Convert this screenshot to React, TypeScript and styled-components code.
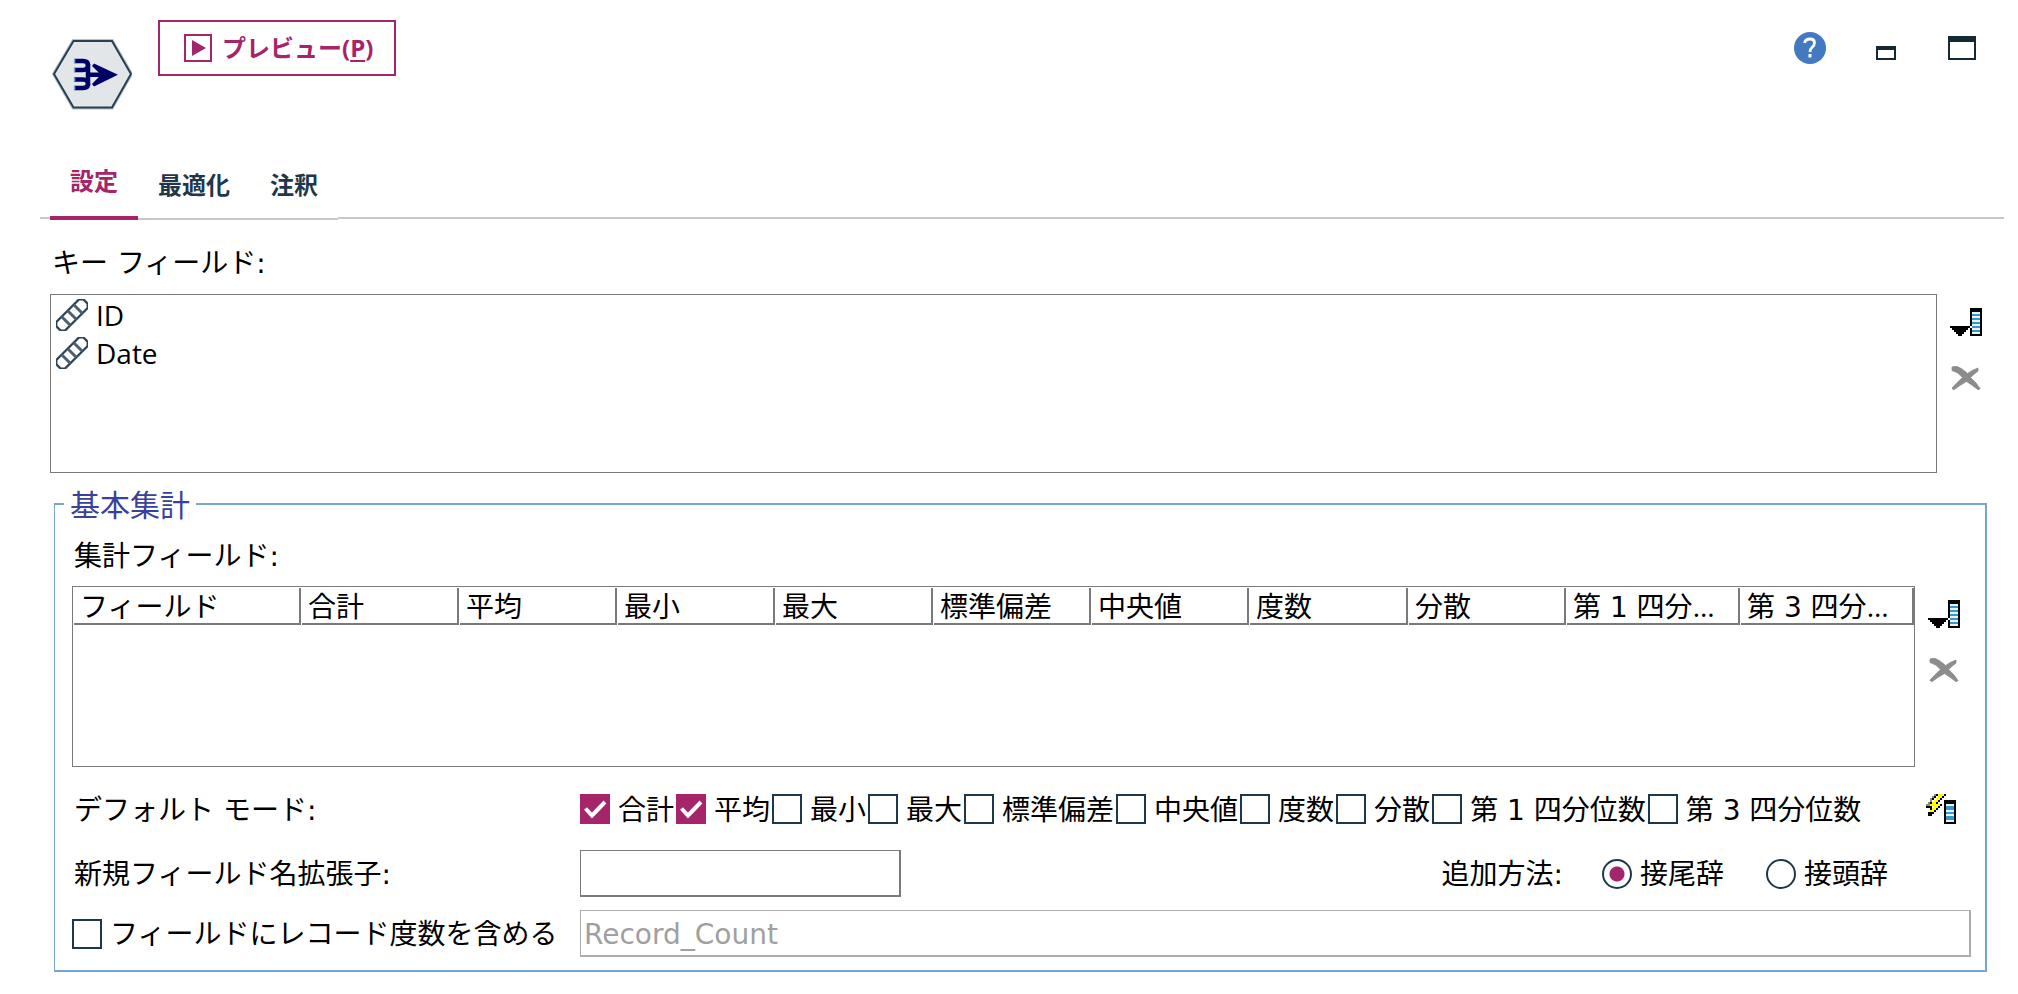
import React, { useState } from "react";
import styled, { createGlobalStyle } from "styled-components";

const accent = "#a5246a";
const ink = "#1f374b";
const line = "#7a7a7a";
const blue = "#76a5d5";

const GlobalStyle = createGlobalStyle`
  *, *::before, *::after { box-sizing: border-box; }
  body {
    margin: 0;
    background: #fff;
    color: #000;
    font: 28px/40px "DejaVu Sans", "Noto Sans CJK JP", sans-serif;
  }
  button, input { font: inherit; color: inherit; margin: 0; }
  button { background: none; border: 0; padding: 0; cursor: pointer; }
  svg { display: block; }
`;

const Page = styled.main`
  padding-bottom: 22px;
`;

const Header = styled.header`
  display: flex;
  align-items: flex-start;
  height: 160px;
  padding: 20px 40px 0 52px;
`;

const NodeBadge = styled.div`
  margin: 18px 26px 0 0;
`;

const PreviewButton = styled.button`
  display: flex;
  align-items: center;
  gap: 10px;
  height: 56px;
  padding: 0 21px 0 24px;
  border: 2px solid ${accent};
  color: ${accent};
  font: bold 24px/36px "Open Sans", "Noto Sans CJK JP", sans-serif;
  white-space: nowrap;
`;

const Mnemonic = styled.span`
  text-decoration: underline;
  text-decoration-thickness: 2px;
  text-underline-offset: 3px;
`;

const WindowControls = styled.div`
  display: flex;
  gap: 44px;
  margin: 12px 0 0 auto;
`;

const TabBar = styled.div`
  display: flex;
  align-items: flex-end;
  height: 60px;
  padding: 0 14px 0 40px;
`;

const TabRule = styled.span<{ $grow?: boolean }>`
  flex: ${(p) => (p.$grow ? "1" : "0 0 10px")};
  margin-bottom: 1px;
  border-bottom: 2px solid #c8c8c8;
`;

const Tab = styled.button<{ $active: boolean }>`
  padding: 0 20px ${(p) => (p.$active ? 18 : 16)}px;
  border-bottom: ${(p) => (p.$active ? `4px solid ${accent}` : "2px solid #c8c8c8")};
  color: ${(p) => (p.$active ? accent : ink)};
  font: bold 24px/36px "Noto Sans CJK JP", sans-serif;
  white-space: nowrap;
`;

const KeySection = styled.section`
  padding: 24px 0 0 50px;
`;

const KeyLabel = styled.h2`
  margin: 0 0 10px 2px;
  font: inherit;
`;

const Split = styled.div`
  display: flex;
  gap: 13px;
`;

const Actions = styled.div<{ $width: number }>`
  display: flex;
  flex-direction: column;
  align-items: flex-start;
  gap: 30px;
  flex: 0 0 ${(p) => p.$width}px;
  padding-top: 14px;
`;

const KeyList = styled.ul`
  flex: 1;
  min-width: 0;
  min-height: 179px;
  margin: 0;
  padding: 1px 5px;
  border: 1px solid ${line};
  list-style: none;
`;

const KeyItem = styled.li`
  display: flex;
  align-items: center;
  gap: 8px;
  height: 38px;
  font-family: "Open Sans", "Noto Sans CJK JP", sans-serif;
`;

const Group = styled.fieldset`
  min-width: 0;
  margin: 11px 31px 0 54px;
  padding: 13px 14px 13px 16px;
  border: 2px solid ${blue};
  border-left-width: 1px;
`;

const GroupTitle = styled.legend`
  margin-left: -7px;
  padding: 4px 6px 0;
  color: #3a419b;
  font-size: 30px;
  line-height: 36px;
`;

const GroupBody = styled.div`
  padding-left: 1px;
`;

const FieldsLabel = styled.h3`
  margin: 0 0 9px 2px;
  font: inherit;
`;

const TableBox = styled.div`
  flex: 1;
  min-width: 0;
  min-height: 181px;
  border: 1px solid ${line};
`;

const Table = styled.table`
  width: 100%;
  table-layout: fixed;
  border-collapse: collapse;
`;

const HeadCell = styled.th`
  padding: 1px 0 0 1px;
  font-weight: normal;
  text-align: left;
`;

const HeadText = styled.div`
  height: 37px;
  padding: 0 0 0 6px;
  border-right: 2px solid ${line};
  border-bottom: 2px solid ${line};
  line-height: 40px;
  white-space: nowrap;
  overflow: hidden;
`;

const Dots = styled.span`
  font-family: "Open Sans", sans-serif;
  line-height: 1;
`;

const Form = styled.div`
  display: flex;
  flex-direction: column;
  gap: 13px;
  margin-top: 14px;
`;

const Row = styled.div<{ $height: number }>`
  display: flex;
  align-items: center;
  min-height: ${(p) => p.$height}px;
`;

const Caption = styled.span`
  padding-top: 3px;
  white-space: nowrap;
`;

const LabelCell = styled.div<{ $inset?: boolean }>`
  display: flex;
  flex: 0 0 508px;
  padding-left: ${(p) => (p.$inset ? 2 : 0)}px;
`;

const CheckRow = styled.div`
  display: flex;
  flex: 1;
  gap: 2px;
`;

const Choice = styled.label`
  display: flex;
  align-items: center;
  gap: 8px;
`;

const Mark = styled.span`
  display: grid;
  flex: none;
  width: 30px;
  height: 30px;
  > * { grid-area: 1 / 1; }
  > svg { pointer-events: none; }
`;

const CheckInput = styled.input`
  appearance: none;
  width: 30px;
  height: 30px;
  border: 2px solid ${ink};
  background: #fff;
  &:checked { border-color: ${accent}; background: ${accent}; }
`;

const RadioInput = styled.input`
  appearance: none;
  width: 30px;
  height: 30px;
  border: 2px solid ${ink};
  border-radius: 50%;
  background: #fff;
  &:checked { background: radial-gradient(circle, ${accent} 7px, #fff 8px); }
`;

const TextInput = styled.input<{ $wide?: boolean }>`
  ${(p) => (p.$wide ? "flex: 1; min-width: 0;" : "width: 321px;")}
  height: 47px;
  padding: 2px 3px 0;
  border: solid ${line};
  border-width: 1px 2px 2px 1px;
  background: #fff;
  &:disabled { border-color: #adadad; color: #a0a0a0; }
`;

const RadioGroup = styled.div`
  display: flex;
  align-items: center;
  gap: 39px;
  margin-left: auto;
  padding-right: 83px;
`;

const RadioOptions = styled.div`
  display: flex;
  gap: 42px;
`;

const IconSlot = styled.div`
  display: flex;
  flex: 0 0 45px;
`;

const NodeIcon = () => (
  <svg width="80" height="72" viewBox="0 0 80 72" aria-hidden="true">
    <path d="M2 36 21.500 3H60L79 36 60 69.500H21.500Z" fill="#e2e6e9" stroke="#b9c2c8" strokeWidth="4" />
    <path d="M2 36 21.500 3H60L79 36 60 69.500H21.500Z" fill="#e2e6e9" stroke="#274054" strokeWidth="2" />
    <path
      d="M22 23H31Q36 23 36 27 36 32 31 32H22M22 41.500H31Q36 41.500 36 46 36 50 31 50H22"
      fill="none"
      stroke="#000066"
      strokeWidth="4.500"
    />
    <path d="M36 26V48M36 36.800H52" fill="none" stroke="#000066" strokeWidth="4.500" />
    <path d="M42 25.500 66 36.800 42 48.500 40 46 49 36.800 40 28Z" fill="#000066" />
    <path d="M22.500 21v4M22.500 30v4M22.500 39.500v4M22.500 48v4" stroke="#7ba9cf" strokeWidth="1.500" />
  </svg>
);

const PlayIcon = () => (
  <svg width="28" height="28" viewBox="0 0 28 28" aria-hidden="true">
    <rect x="1" y="1" width="26" height="26" fill="none" stroke={accent} strokeWidth="2" />
    <path d="M8 6v16l14-8Z" fill={accent} />
  </svg>
);

const HelpIcon = () => (
  <svg width="32" height="32" viewBox="0 0 32 32" aria-hidden="true">
    <circle cx="16" cy="16" r="16" fill="#4379c0" />
    <path d="M10.500 11Q11.500 7 16 7 20.500 7 20.500 11 20.500 13.500 18 15.500 16 17 16 20" fill="none" stroke="#fff" strokeWidth="2.800" />
    <rect x="14.500" y="22" width="3" height="3.500" fill="#fff" />
  </svg>
);

const MinimizeIcon = () => (
  <svg width="32" height="32" viewBox="0 0 32 32" aria-hidden="true">
    <path fillRule="evenodd" d="M6 14h20v14H6ZM8 18v8h16v-8Z" fill="#152935" />
  </svg>
);

const MaximizeIcon = () => (
  <svg width="32" height="32" viewBox="0 0 32 32" aria-hidden="true">
    <path fillRule="evenodd" d="M2 4h28v24H2ZM4 10v16h24V10Z" fill="#152935" />
  </svg>
);

const ContinuousIcon = () => (
  <svg width="32" height="32" viewBox="0 0 32 32" aria-hidden="true">
    <g transform="rotate(-45 16 16)" fill="none">
      <path d="M0 10H32L35 13V19L32 22H0L-3 19V13Z" stroke="#9aa6af" strokeWidth="3" />
      <path d="M0 10H32L35 13V19L32 22H0L-3 19V13Z" fill="#fff" stroke="#2c4356" strokeWidth="2" />
      <path d="M7.500 10v12M16 10v12M24.500 10v12" stroke="#4b6070" strokeWidth="3" />
    </g>
  </svg>
);

const FieldPickerIcon = () => (
  <svg width="32" height="28" viewBox="0 0 32 28" aria-hidden="true" shapeRendering="crispEdges">
    <path d="M20 0h12v28H20Z" />
    <path d="M22 4h8v22h-8Z" fill="#e9f3f7" />
    <path d="M22 6h8v2h-8zM22 10h8v2h-8zM22 14h8v2h-8zM22 18h8v2h-8zM22 22h8v2h-8z" fill="#3399cc" />
    <path d="M0 18h20v2h-2v2h-2v2h-2v2h-2v2H8v-2H6v-2H4v-2H2v-2H0Z" />
    <path d="M20 18h2v2h-2Z" fill="#fff" />
  </svg>
);

const RemoveIcon = () => (
  <svg width="32" height="24" viewBox="0 0 32 24" aria-hidden="true">
    <path
      d="M2 1 6 0Q12 2 17.500 7.500 22 4 28 2V5Q24 8 20.500 11.500 26 16 30 22.500L28.500 24Q22 19 16.500 15.500 10 19 3.500 24L2 22Q7 16.500 12.500 11.500 8 6 2 4.500Z"
      fill="#8c8c8c"
      stroke="#8c8c8c"
      strokeWidth="0.800"
    />
  </svg>
);

const ApplyDefaultsIcon = () => (
  <svg width="30" height="30" viewBox="0 0 30 30" aria-hidden="true" shapeRendering="crispEdges">
    <path d="M8 0h12v2h-2v2h-2v2h-2v2h-2v2h4v2h-2v2h-2v2h-2v2H8v2H6v2H2v-4h2v-4H0v-2h2V8h2V4h2V2h2Z" fill="#000" />
    <path d="M8 0h2v2H8v2H6v4H4v4H0v-2h2V8h2V4h2V2h2Z" fill="#8a8a8a" />
    <path d="M12 0h6v2h-2v2h-2v2h-2v2h-2v2h4v2h-2v2h-2v2H8v2H4v-2h2v-4H4v-2h2V6h2V4h2V2h2Z" fill="#ffff00" />
    <path d="M10 2h2v2h-2v2H8v2H6V6h2V4h2ZM6 12h2v2H6Z" fill="#fff" />
    <path d="M18 6h12v24H18Z" />
    <path d="M20 10h8v18h-8Z" fill="#e9f3f7" />
    <path d="M20 12h8v4h-8zM20 18h8v2h-8zM20 22h8v4h-8z" fill="#3399cc" />
  </svg>
);

const CheckIcon = () => (
  <svg width="30" height="30" viewBox="0 0 30 30" aria-hidden="true">
    <path d="M5.500 14.500 12 21.500 25 8" fill="none" stroke="#fff" strokeWidth="4" />
  </svg>
);

type CheckboxProps = { label: string; checked: boolean; onToggle: () => void };

const Checkbox = ({ label, checked, onToggle }: CheckboxProps) => (
  <Choice>
    <Mark>
      <CheckInput type="checkbox" checked={checked} onChange={onToggle} />
      {checked && <CheckIcon />}
    </Mark>
    <Caption>{label}</Caption>
  </Choice>
);

const FieldActions = ({ width }: { width: number }) => (
  <Actions $width={width}>
    <button type="button" aria-label="フィールドの選択"><FieldPickerIcon /></button>
    <button type="button" aria-label="削除"><RemoveIcon /></button>
  </Actions>
);

const tabs = ["設定", "最適化", "注釈"];
const columns: { name: string; width: number; cut?: boolean }[] = [
  { name: "フィールド", width: 228 },
  { name: "合計", width: 158 },
  { name: "平均", width: 158 },
  { name: "最小", width: 158 },
  { name: "最大", width: 158 },
  { name: "標準偏差", width: 158 },
  { name: "中央値", width: 158 },
  { name: "度数", width: 159 },
  { name: "分散", width: 158 },
  { name: "第 1 四分", width: 174, cut: true },
  { name: "第 3 四分", width: 174, cut: true },
];
const modes = ["合計", "平均", "最小", "最大", "標準偏差", "中央値", "度数", "分散", "第 1 四分位数", "第 3 四分位数"];
const placements = ["接尾辞", "接頭辞"];

export default function App() {
  const [tab, setTab] = useState(tabs[0]);
  const [selected, setSelected] = useState<string[]>(["合計", "平均"]);
  const [placement, setPlacement] = useState(placements[0]);
  const [extension, setExtension] = useState("");
  const [includeCount, setIncludeCount] = useState(false);
  const [countName, setCountName] = useState("Record_Count");

  const toggleMode = (mode: string) =>
    setSelected((s) => (s.includes(mode) ? s.filter((m) => m !== mode) : [...s, mode]));

  return (
    <Page>
      <GlobalStyle />
      <Header>
        <NodeBadge><NodeIcon /></NodeBadge>
        <PreviewButton type="button">
          <PlayIcon />
          <span>プレビュー(<Mnemonic>P</Mnemonic>)</span>
        </PreviewButton>
        <WindowControls>
          <button type="button" aria-label="ヘルプ"><HelpIcon /></button>
          <button type="button" aria-label="最小化"><MinimizeIcon /></button>
          <button type="button" aria-label="最大化"><MaximizeIcon /></button>
        </WindowControls>
      </Header>

      <TabBar role="tablist">
        <TabRule />
        {tabs.map((name) => (
          <Tab key={name} type="button" role="tab" aria-selected={tab === name} $active={tab === name} onClick={() => setTab(name)}>
            {name}
          </Tab>
        ))}
        <TabRule $grow />
      </TabBar>

      <KeySection>
        <KeyLabel>キー フィールド:</KeyLabel>
        <Split>
          <KeyList>
            {["ID", "Date"].map((field) => (
              <KeyItem key={field}><ContinuousIcon />{field}</KeyItem>
            ))}
          </KeyList>
          <FieldActions width={68} />
        </Split>
      </KeySection>

      <Group>
        <GroupTitle>基本集計</GroupTitle>
        <GroupBody>
          <FieldsLabel>集計フィールド:</FieldsLabel>
          <Split>
            <TableBox>
              <Table>
                <colgroup>
                  {columns.map((c) => <col key={c.name} width={c.width} />)}
                </colgroup>
                <thead>
                  <tr>
                    {columns.map((c) => (
                      <HeadCell key={c.name} scope="col">
                        <HeadText>{c.name}{c.cut && <Dots>...</Dots>}</HeadText>
                      </HeadCell>
                    ))}
                  </tr>
                </thead>
                <tbody />
              </Table>
            </TableBox>
            <FieldActions width={43} />
          </Split>

          <Form>
            <Row $height={56}>
              <LabelCell $inset><Caption>デフォルト モード:</Caption></LabelCell>
              <CheckRow>
                {modes.map((mode) => (
                  <Checkbox key={mode} label={mode} checked={selected.includes(mode)} onToggle={() => toggleMode(mode)} />
                ))}
              </CheckRow>
              <IconSlot>
                <button type="button" aria-label="デフォルトの適用"><ApplyDefaultsIcon /></button>
              </IconSlot>
            </Row>
            <Row $height={47}>
              <LabelCell $inset>
                <Caption as="label" htmlFor="extension">新規フィールド名拡張子:</Caption>
              </LabelCell>
              <TextInput id="extension" type="text" value={extension} onChange={(e) => setExtension(e.target.value)} />
              <RadioGroup role="radiogroup" aria-labelledby="placement">
                <Caption id="placement">追加方法:</Caption>
                <RadioOptions>
                  {placements.map((name) => (
                    <Choice key={name}>
                      <RadioInput type="radio" name="placement" checked={placement === name} onChange={() => setPlacement(name)} />
                      <Caption>{name}</Caption>
                    </Choice>
                  ))}
                </RadioOptions>
              </RadioGroup>
            </Row>
            <Row $height={47}>
              <LabelCell>
                <Checkbox label="フィールドにレコード度数を含める" checked={includeCount} onToggle={() => setIncludeCount((v) => !v)} />
              </LabelCell>
              <TextInput
                $wide
                type="text"
                aria-label="レコード度数のフィールド名"
                value={countName}
                disabled={!includeCount}
                onChange={(e) => setCountName(e.target.value)}
              />
            </Row>
          </Form>
        </GroupBody>
      </Group>
    </Page>
  );
}
